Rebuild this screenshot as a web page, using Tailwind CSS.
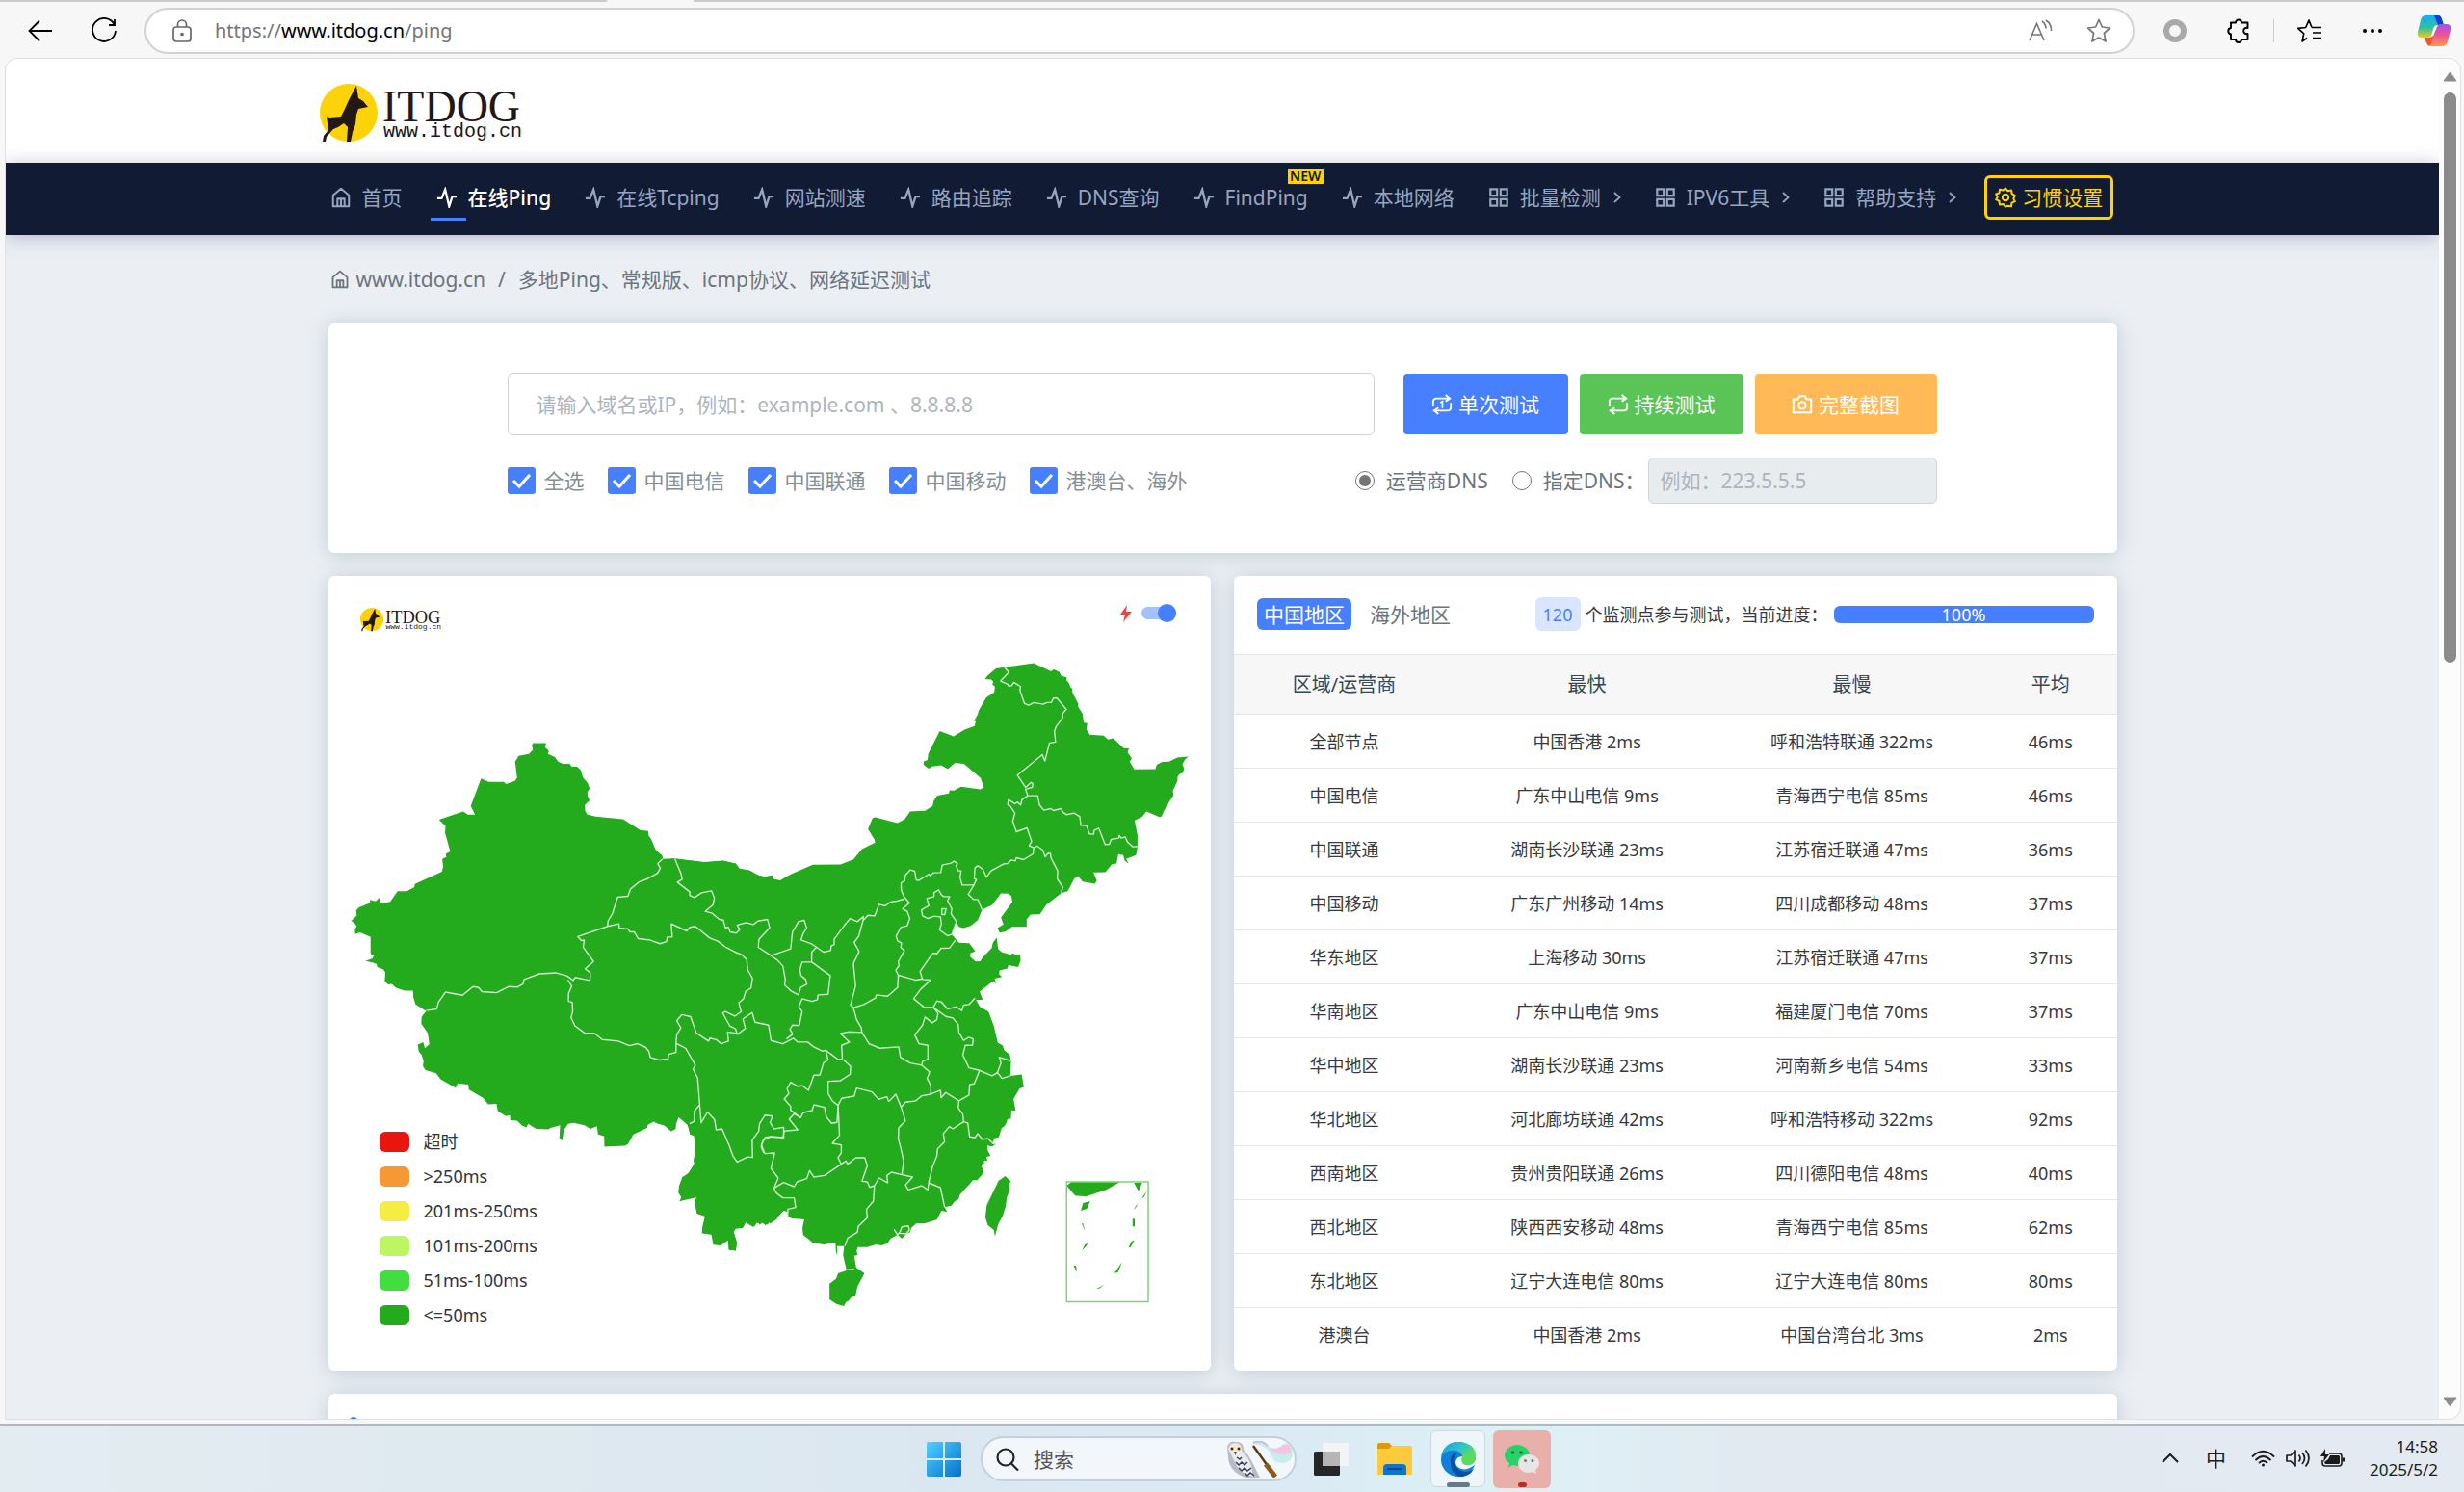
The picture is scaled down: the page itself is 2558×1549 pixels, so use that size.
<!DOCTYPE html>
<html lang="zh-CN">
<head>
<meta charset="utf-8">
<title>多地Ping - ITDOG</title>
<script src="https://cdn.jsdelivr.net/npm/@tailwindcss/browser@4"></script>
</head>
<body class="h-screen overflow-hidden bg-[#f7f7f7] font-['Noto_Sans','Noto_Sans_CJK_SC',sans-serif] text-[21px] leading-8 text-[#373a3c]">
<svg class="hidden" aria-hidden="true">
  <symbol id="pulse" viewBox="0 0 24 24"><path d="M1 13h5L10 3l4.500 19L18 11h5" fill="none" stroke="currentColor" stroke-width="2.500"/></symbol>
  <symbol id="home" viewBox="0 0 24 24"><path d="M3 9.500 12 2l9 7.500V22H3zM8 22v-8.500h8V22M12 13.500V22" fill="none" stroke="currentColor" stroke-width="2.200" stroke-linejoin="round"/></symbol>
  <symbol id="grid" viewBox="0 0 24 24"><path d="M2.500 2.500h7.500v7.500H2.500zM14 2.500h7.500v7.500H14zM2.500 14h7.500v7.500H2.500zM14 14h7.500v7.500H14z" fill="none" stroke="currentColor" stroke-width="2.400"/></symbol>
  <symbol id="chev" viewBox="0 0 8 12"><path d="M1 1l5.500 5L1 11" fill="none" stroke="currentColor" stroke-width="1.800"/></symbol>
  <symbol id="loop" viewBox="0 0 24 24"><path d="M2 14V9q0-4 4-4h14M16 1l5 4-5 3.500M22 10v5q0 4-4 4H4M8 15.500 3 19l5 4" fill="none" stroke="currentColor" stroke-width="2"/></symbol>
  <symbol id="dog" viewBox="0 0 212 62">
    <circle cx="30" cy="30" r="30" fill="#fcd208"/>
    <path d="M38 2 40 15l5 3 5 6-10 2-2 6-1 10-3 8-2 10h-4l1-15-4-4-6 4-5 2-7 8-1 5H3l1-6 5-6-2-14 3 1 12-1 4-8 4-9z" fill="#231815"/>
    <text x="65" y="39" font-family="Liberation Serif" font-size="46" fill="#231815">ITDOG</text>
    <text x="66" y="55" font-family="Liberation Mono" font-size="20" fill="#231815">www.itdog.cn</text>
  </symbol>
</svg>

<div class="flex h-full flex-col">
  <!-- browser toolbar -->
  <header class="shrink-0">
    <div class="flex h-[2px] justify-between"><i class="w-[630px] bg-[#cbcbcb]"></i><i class="ml-[90px] grow bg-[#cbcbcb]"></i></div>
    <div class="flex h-[59px] items-center pl-[29px] pr-[14px] text-black">
      <button aria-label="返回"><svg class="h-[26px] w-[26px]" viewBox="0 0 26 26" fill="none" stroke="currentColor" stroke-width="1.800"><path d="M25 13H2M12 2.500 1.500 13 12 23.500"/></svg></button>
      <button aria-label="刷新" class="ml-[39px]"><svg class="h-[28px] w-[28px]" viewBox="0 0 28 28" fill="none" stroke="currentColor" stroke-width="1.800"><path d="M25 8A12 12 0 1 0 26 14M25 2v6h-6"/></svg></button>
      <div class="ml-[28px] flex h-[48px] grow items-center rounded-full border-2 border-[#d2d2d2] bg-white pl-[27px] pr-[22px]">
        <svg class="h-[24px] w-[20px]" viewBox="0 0 20 24" fill="none" stroke="#666" stroke-width="1.700"><rect x="1" y="8" width="18" height="15" rx="3"/><path d="M5.500 8V5.500a4.500 4.500 0 0 1 9 0V8"/><circle cx="10" cy="15.500" r="1" fill="#555"/></svg>
        <a href="#" class="ml-[24px] grow text-[20px] text-[#757575]">https://<span class="text-black">www.itdog.cn</span>/ping</a>
        <button aria-label="朗读"><svg class="h-[24px] w-[26px]" viewBox="0 0 26 24" fill="none" stroke="#777" stroke-width="1.600"><path d="M1 22 8.500 4.500 16 22M3.500 16h10M14 2q4 3 4 7.500M18 1q6 4 5.500 11"/></svg></button>
        <button aria-label="收藏" class="ml-[34px]"><svg class="h-[26px] w-[26px]" viewBox="0 0 26 26" fill="none" stroke="#777" stroke-width="1.700" stroke-linejoin="round"><path d="m13 1.500 3.400 7.500 8 1-6 5.500 1.700 8.500-7.100-4-7.100 4 1.700-8.500-6-5.500 8-1z"/></svg></button>
      </div>
      <div class="ml-[30px] h-[24px] w-[24px] rounded-full border-[6px] border-[#a9a9a9]"></div>
      <button aria-label="扩展" class="ml-[42px]"><svg class="h-[26px] w-[26px]" viewBox="0 0 26 26" fill="none" stroke="currentColor" stroke-width="1.900"><path d="M9 4.500a3 3 0 0 1 6 0h6.500V10a3.200 3.200 0 1 0 0 6v6H15a3 3 0 0 1-6 0H4v-5.500a3.300 3.300 0 0 1 0-6.500V4.500z" stroke-linejoin="round"/></svg></button>
      <div class="ml-[22px] h-[24px] w-px bg-[#ccc]"></div>
      <button aria-label="收藏夹" class="ml-[24px]"><svg class="h-[26px] w-[26px]" viewBox="0 0 26 26" fill="none" stroke="currentColor" stroke-width="1.700" stroke-linejoin="round"><path d="M15 9.500 12 2 8.700 9.500l-8 .800 6 5.500L5 24l5-3.500M15 9.500h10M16 15h9M16 20.500h9"/></svg></button>
      <button aria-label="设置及其他" class="ml-[41px]"><svg class="h-[6px] w-[22px]" viewBox="0 0 22 6"><circle cx="3" cy="3" r="2"/><circle cx="11" cy="3" r="2"/><circle cx="19" cy="3" r="2"/></svg></button>
      <button aria-label="Copilot" class="ml-[36px]"><svg class="h-[32px] w-[34px]" viewBox="0 0 34 32">
        <defs><linearGradient id="ca" x1="0" y1="0" x2="0" y2="1"><stop offset="0" stop-color="#19a9f5"/><stop offset=".55" stop-color="#2fc3a0"/><stop offset="1" stop-color="#f4c81e"/></linearGradient><linearGradient id="cb" x1="0" y1="0" x2="0" y2="1"><stop offset="0" stop-color="#a44df0"/><stop offset=".5" stop-color="#ee5590"/><stop offset="1" stop-color="#fb9a45"/></linearGradient></defs>
        <path d="M9 0h12q3 0 4 4l2 6h-6q-4 0-5 4l-2 7q-1 2-4 2H4q-5 0-4-6L3 5Q4 0 9 0z" fill="url(#ca)"/><path d="M17 0h4q3 0 4 4l2 6h-6z" fill="#1441c9"/>
        <path d="M25 32H13q-3 0-4-4l-2-5h5q4 0 5-4l3-7q1-3 4-3h6q5 0 4 6l-3 12q-1 5-7 5z" fill="url(#cb)"/><path d="M7 23h5q3 0 4-2l-2 8q-1 3-3 2-2-2-4-8z" fill="#f2542b"/></svg></button>
    </div>
  </header>

  <div class="mr-[4px] ml-[6px] flex min-h-0 grow overflow-hidden rounded-t-xl rounded-br-xl outline outline-[#e0e0e0]">
    <div class="flex min-w-0 grow flex-col overflow-hidden bg-[#ebeff4]">
      <div class="h-[108px] shrink-0 bg-white">
        <div class="mx-auto w-full max-w-[1875px] pt-[26px]"><a href="#" aria-label="ITDOG"><svg class="h-[62px] w-[212px]"><use href="#dog"/></svg></a></div>
      </div>
      <nav class="relative h-[75px] shrink-0 bg-[#111b33] pb-[3px] text-[#96a5c0] shadow-[0_2px_18px_rgba(70,80,120,0.35)]">
        <div class="mx-auto flex h-full w-full max-w-[1853px] items-center gap-[35px] whitespace-nowrap [&_svg]:shrink-0">
          <a href="#" class="flex items-center gap-[11px]"><svg class="h-[22px] w-[22px]"><use href="#home"/></svg>首页</a>
          <a href="#" class="relative flex items-center gap-[11px] font-medium text-white"><svg class="h-[22px] w-[22px]"><use href="#pulse"/></svg>在线Ping<i class="absolute -bottom-2 -left-1.5 h-[3px] w-[37px] bg-[#4680ff]"></i></a>
          <a href="#" class="flex items-center gap-[11px]"><svg class="h-[22px] w-[22px]"><use href="#pulse"/></svg>在线Tcping</a>
          <a href="#" class="flex items-center gap-[11px]"><svg class="h-[22px] w-[22px]"><use href="#pulse"/></svg>网站测速</a>
          <a href="#" class="flex items-center gap-[11px]"><svg class="h-[22px] w-[22px]"><use href="#pulse"/></svg>路由追踪</a>
          <a href="#" class="flex items-center gap-[11px]"><svg class="h-[22px] w-[22px]"><use href="#pulse"/></svg>DNS查询</a>
          <a href="#" class="relative flex items-center gap-[11px]"><svg class="h-[22px] w-[22px]"><use href="#pulse"/></svg>FindPing<b class="absolute -top-3.5 -right-4 flex h-4 w-[37px] items-center justify-center bg-[#ffd300] text-[14px] font-semibold text-[#111b33]">NEW</b></a>
          <a href="#" class="flex items-center gap-[11px]"><svg class="h-[22px] w-[22px]"><use href="#pulse"/></svg>本地网络</a>
          <a href="#" class="flex items-center gap-[11px]"><svg class="h-[22px] w-[22px]"><use href="#grid"/></svg>批量检测<svg class="ml-0.5 h-[12px] w-[8px]"><use href="#chev"/></svg></a>
          <a href="#" class="flex items-center gap-[11px]"><svg class="h-[22px] w-[22px]"><use href="#grid"/></svg>IPV6工具<svg class="ml-0.5 h-[12px] w-[8px]"><use href="#chev"/></svg></a>
          <a href="#" class="flex items-center gap-[11px]"><svg class="h-[22px] w-[22px]"><use href="#grid"/></svg>帮助支持<svg class="ml-0.5 h-[12px] w-[8px]"><use href="#chev"/></svg></a>
          <button class="-ml-1.5 flex h-[46px] items-center gap-1.5 rounded-md border-[3px] border-[#ffd300] px-2 text-[#ffd300]"><svg class="h-[22px] w-[22px]" viewBox="0 0 24 24" fill="none" stroke="currentColor" stroke-width="2.200" stroke-linejoin="round"><path d="m12 1.500 2.600 3.200 4.100-.900.500 4.100 3.500 2-1.700 3.600 1.700 3-3.700 1.600-.500 4-4.200-.600L12 22.500l-2.600-2.800-4 .400-.600-4-3.500-1.700L3 11.500 1.300 8.200l3.600-1.300.600-4 4.100 1z"/><circle cx="12" cy="12" r="3.500"/></svg>习惯设置</button>
        </div>
      </nav>

      <main class="mx-auto flex w-full max-w-[1857px] flex-col">
        <div class="flex h-[91px] items-center gap-[7px] pl-[2px] text-[#6c757d]">
          <svg class="h-[20px] w-[20px]"><use href="#home"/></svg><a href="#">www.itdog.cn</a><span class="mx-1.5">/</span><span>多地Ping、常规版、icmp协议、网络延迟测试</span>
        </div>

        <section class="rounded-md bg-white pt-[52px] pr-[187px] pb-[51px] pl-[186px] shadow-[0_2px_20px_rgba(60,90,120,0.25)]">
          <div class="flex items-center">
            <input aria-label="域名或IP" placeholder="请输入域名或IP，例如：example.com 、8.8.8.8" class="h-[65px] min-w-0 grow rounded-md border border-[#ced4da] px-[29px] placeholder:text-[#adb5bd]">
            <button class="ml-[30px] flex h-[63px] w-[171px] items-center justify-center gap-[6px] rounded-sm bg-[#4680ff] text-white"><svg class="h-[22px] w-[22px]" viewBox="0 0 24 24"><use href="#loop"/><path d="m10 10 2.500-1.500V16" fill="none" stroke="currentColor" stroke-width="1.800"/></svg>单次测试</button>
            <button class="ml-3 flex h-[63px] w-[170px] items-center justify-center gap-[6px] rounded-sm bg-[#5ac456] text-white"><svg class="h-[22px] w-[22px]"><use href="#loop"/></svg>持续测试</button>
            <button class="ml-3 flex h-[63px] w-[189px] items-center justify-center gap-[6px] rounded-sm bg-[#ffba57] text-white"><svg class="h-[22px] w-[22px]" viewBox="0 0 24 24" fill="none" stroke="currentColor" stroke-width="2.200" stroke-linejoin="round"><path d="M2 6h5l2-3.500h6L17 6h5v15H2z"/><circle cx="12" cy="13" r="4"/></svg>完整截图</button>
          </div>
          <div class="mt-[23px] flex items-center whitespace-nowrap text-[#868e96]">
            <div id="checks" class="flex grow gap-[24px]"></div>
            <div class="flex items-center text-[#6c757d]">
              <label class="flex items-center gap-3"><input type="radio" name="dns" checked class="h-[20px] w-[20px] accent-[#757575]">运营商DNS</label>
              <label class="ml-[25px] flex items-center gap-3"><input type="radio" name="dns" class="h-[20px] w-[20px] accent-[#757575]">指定DNS：</label>
              <input aria-label="指定DNS" disabled placeholder="例如：223.5.5.5" class="ml-[3px] h-[48px] w-[300px] rounded-md border border-[#ced4da] bg-[#e9ecef] px-3 placeholder:text-[#adb5bd]">
            </div>
          </div>
        </section>

        <div class="mt-[24px] grid grid-cols-2 gap-[24px]">
          <section class="relative rounded-md bg-white shadow-[0_2px_20px_rgba(60,90,120,0.25)]">
            <svg class="block h-auto w-full" viewBox="341 598 916 825" role="img" aria-label="中国地图">
              <g fill="#24aa1d">
                <path transform="translate(340 600) scale(.33333 .52934)" d="M74 672 91 662 89 652 97 646 133 637 131 631 150 634 161 627 166 638 195 635 218 614 247 614 270 606 272 600 310 589 356 576 360 566 357 551 370 547 368 541 382 536 366 500 367 486 347 474 422 458 437 464 459 464 446 447 478 393 502 400 549 400 556 404 583 398 590 392 584 360 595 349 627 345 639 337 636 328 640 324 681 324 677 332 689 339 686 345 708 351 718 360 735 365 753 364 760 370 777 370 788 376 795 391 810 402 816 413 809 420 810 428 816 436 801 445 802 457 809 464 835 468 920 473 973 494 998 496 1000 506 1007 511 1022 534 1040 545 1043 551 1080 550 1173 557 1230 554 1270 560 1283 570 1313 573 1338 582 1360 586 1387 583 1388 590 1409 593 1440 582 1440 1237 1434 1243 1420 1240 1395 1258 1383 1258 1369 1268 1352 1264 1345 1268 1338 1262 1329 1271 1302 1262 1293 1274 1270 1276 1264 1283 1274 1302 1271 1318 1250 1318 1247 1298 1223 1308 1202 1306 1195 1287 1166 1284 1168 1270 1175 1251 1150 1246 1143 1220 1150 1214 1120 1215 1097 1222 1101 1214 1093 1205 1094 1192 1103 1187 1105 1175 1125 1166 1142 1148 1139 1143 1145 1125 1144 1100 1141 1092 1130 1089 1120 1072 1093 1057 1085 1070 1084 1080 1072 1084 1048 1071 1015 1066 997 1072 995 1078 952 1091 935 1110 925 1113 862 1115 861 1094 842 1091 839 1075 818 1080 800 1073 766 1068 749 1070 735 1083 731 1103 722 1098 724 1073 695 1078 687 1081 650 1080 636 1075 625 1070 619 1077 606 1074 590 1064 569 1063 568 1053 555 1055 530 1045 526 1031 500 1032 484 1019 440 1003 438 993 405 991 399 1000 352 983 338 971 305 965 297 957 299 947 293 935 284 928 281 915 298 910 303 922 317 914 312 892 292 874 293 860 307 849 274 836 267 822 266 809 239 809 212 803 200 796 189 797 178 791 180 773 173 767 155 763 153 757 140 754 118 751 140 746 144 741 134 737 134 704 101 695 86 698 85 688 91 683 84 677Z"/>
                <path transform="translate(680 660) scale(.3699 .33333)" d="M0 1110 0 665 20 685 22 697 55 694 140 706 192 701 227 710 235 725 265 731 287 745 307 751 330 746 331 759 350 763 380 743 442 713 520 712 556 696 580 664 617 644 615 634 597 602 610 567 617 565 680 583 700 571 715 547 757 545 778 530 781 515 791 498 824 491 826 481 838 482 858 470 912 478 922 473 913 443 866 399 841 396 821 415 802 403 777 407 767 414 753 402 753 391 764 387 766 367 798 297 837 313 868 292 896 281 899 266 894 265 905 244 907 234 929 192 951 176 953 158 946 152 948 142 942 136 925 135 932 124 956 102 980 98 1062 85 1110 111 1118 105 1133 112 1139 124 1155 130 1153 138 1160 146 1165 160 1170 164 1170 176 1187 212 1186 220 1199 243 1202 270 1212 273 1210 292 1219 308 1258 311 1270 323 1285 319 1314 350 1329 351 1325 363 1337 382 1331 392 1344 416 1403 415 1407 402 1422 393 1441 392 1465 379 1496 376 1486 385 1479 400 1484 414 1480 427 1471 430 1465 440 1465 452 1452 483 1454 497 1440 520 1435 535 1429 540 1421 561 1416 565 1378 547 1365 564 1345 575 1353 622 1353 657 1349 683 1321 695 1328 710 1317 700 1313 683 1299 680 1294 709 1281 711 1263 736 1229 737 1239 762 1233 772 1199 765 1186 748 1175 757 1157 795 1139 801 1097 838 1079 867 1053 868 1042 883 1042 906 1001 906 982 921 966 924 960 910 977 899 970 877 1002 829 999 810 990 803 970 802 945 838 917 853 905 885 885 903 865 910 852 906 845 893 832 930 852 956 881 957 898 982 884 989 884 1000 899 1014 912 1013 918 1002 944 972 947 956 958 940 962 975 972 985 997 993 1005 988 1009 994 1024 994 1025 1012 1018 1031 991 1025 988 1036 966 1042 965 1054 973 1062 952 1067 957 1083 948 1075 910 1108 918 1133 0 1133Z"/>
                <path transform="translate(680 960) scale(.3699 .33333)" d="M0 200 910 208 918 233 900 232 903 240 911 255 935 270 950 315 961 367 975 376 979 390 995 405 998 425 996 470 1028 466 1034 505 1022 510 1005 542 1011 578 999 577 998 603 988 605 985 617 978 629 972 632 964 661 951 664 946 680 955 683 945 690 932 687 933 703 941 719 929 722 932 735 923 733 922 744 915 747 921 773 903 795 892 794 880 810 868 823 855 840 851 853 839 862 831 874 812 879 819 894 803 890 790 918 755 930 732 930 718 944 715 957 704 963 692 977 680 965 660 977 652 991 635 998 620 995 595 1003 568 1003 565 1016 568 1028 558 1030 564 1067 587 1085 567 1127 562 1154 550 1160 541 1172 536 1173 529 1187 508 1180 489 1166 489 1117 507 1102 513 1085 537 1076 527 1028 530 1000 510 1000 511 1030 507 1018 506 992 493 989 475 996 441 989 431 979 415 966 413 943 418 917 383 914 372 906 372 893 361 890 343 904 341 916 323 930 316 922 310 936 299 925 296 933 292 922 288 930 283 926 276 941 254 927 246 942 227 943 220 955 229 990 226 1015 206 1010 205 981 184 998 163 996 158 964 131 960 133 940 141 908 117 898 110 860 119 848 68 860 75 848 66 835 68 810 76 785 90 778 110 745 113 712 109 657 97 652 92 620 66 598 54 625 55 633 45 643 27 625 0 616ZM982 782 998 799 994 804 995 823 986 850 983 877 975 906 962 932 953 970 950 950 933 935 926 910 930 873 963 797ZM1154 812 1168 800 1305 800 1265 825 1208 846 1178 843ZM1343 803H1366L1356 829ZM1200 866 1220 860 1211 884 1194 890ZM1339 915h6v24h-6zM1336 985l8-2-10 20-6 2zM1310 1050l-12 32-10 2zM1380 828l-9 20-6 2zM1173 1060l7 1 4 21zM1196 928l4 2 6 24zM1216 990l-8 12-11 12 8-18zM1354 870l-12 20 6-16zM1261 1120l-15 12-8 1z"/>
              </g>
              <path transform="translate(680 960) scale(.3699 .33333)" d="M1154 800H1383V1173H1154Z" fill="none" stroke="#82cf7e" stroke-width="1.500" vector-effect="non-scaling-stroke"/>
              <g fill="none" stroke="#cfeccd" stroke-width="1.400" stroke-linejoin="round">
                <path vector-effect="non-scaling-stroke" transform="translate(340 600) scale(.33333 .52934)" d="M1043 551 1028 560 1036 569 1027 579 995 590 970 596 943 610 935 624 903 626 887 658 873 673 872 683 779 703 790 711 799 710 796 724 828 752 802 766 818 774 817 789 771 783 765 789 745 780 710 774 660 776 612 787 608 796 590 802 565 801 526 813 481 811 470 803 453 801 420 818 367 812 345 832 340 845 307 848M872 683 907 678 908 686 935 688 942 694 955 694 967 707 1005 710 1035 717 1055 713 1058 704 1073 704 1070 678 1118 692 1128 685 1145 683 1190 706 1215 712 1240 724 1270 734 1288 738 1305 748 1308 768 1323 785 1318 804 1302 810 1295 825 1280 833 1288 850 1268 859 1238 850 1230 853 1252 878 1270 884 1275 893 1245 890 1248 908 1225 913 1210 905 1190 902 1186 908 1148 892 1130 860 1103 856 1087 868 1100 882 1087 895 1085 912 1085 930 1062 934 1060 943 1033 945 1005 940 1000 928 990 920 965 913 940 917 905 908 855 905 832 893 800 892 770 878 758 862 763 850 762 832 750 830 750 815 760 800 748 788M1085 912 1115 922 1145 955 1138 963 1152 980 1163 1068 1183 1047 1205 1062 1210 1082 1228 1080 1250 1112 1262 1133 1275 1145 1308 1135 1323 1136 1322 1102 1342 1085 1345 1070 1362 1053 1385 1055 1378 1068 1390 1080 1420 1077 1420 1097 1380 1095 1355 1103 1350 1115 1358 1127M1160 1032 1142 1045 1142 1065 1127 1070"/>
                <path vector-effect="non-scaling-stroke" transform="translate(680 660) scale(.3699 .33333)" d="M980 98 992 114 969 141 989 151 992 157 1000 155 1006 145 1025 158 1023 170 1036 211 1048 216 1062 208 1088 213 1099 208 1111 208 1117 194 1127 194 1153 229 1143 242 1143 256 1125 282 1120 297 1123 331 1106 334 1093 390 1086 370 1016 434 1039 472 1054 457 1059 460 1058 472 1039 478 1045 498 1073 498 1078 527 1090 543 1110 538 1117 544 1139 538 1143 549 1154 557 1175 552 1191 563 1194 590 1210 591 1218 617 1230 618 1231 606 1244 599 1262 650 1274 649 1279 634 1300 630 1302 622 1307 630 1318 626 1325 642 1340 657 1353 656M1045 498 1029 510 1025 527 1016 518 1009 523 991 511 989 526 996 530 1009 552 1003 577 1013 610 1043 598 1056 640 1049 654 1062 660 1060 679 1033 697 1013 691 1010 701 999 698 989 709 978 710 942 732 929 752 919 727 905 716 897 722 895 756 901 759 894 776 878 805 893 821 905 821 917 853M1062 660 1072 655 1087 667 1094 688 1102 677 1109 678 1110 691 1129 732 1128 757 1143 782 1139 801M894 776 861 776 855 752 858 732 850 732 844 716 848 709 838 702 830 708 805 714 801 737 780 738 771 747 768 742 739 762 732 760 728 733 715 729 702 745 700 763 690 769 690 790 697 811 713 832 694 850 707 858 714 880 707 903 689 908 676 935 680 950 691 957 689 970 699 980 682 1015 684 1027 675 1041 682 1057M697 820 678 826 660 829 645 841 628 836 616 872 597 870 583 886 584 874 567 890 547 880 534 897 502 945 502 962 494 965 492 980 472 985 440 960 409 947 415 927 425 910 418 886 402 890 385 922 380 975 325 996 289 970 291 945 321 909 315 883 288 888 275 899 255 893 230 901 237 915 227 926 210 922 205 907 197 910 191 885 180 883 160 864 140 858 162 838 166 816 158 794 130 800 110 815 97 808 97 797 62 767 76 758 72 740 55 694M583 886 571 935 558 955 572 983 556 1020 562 1090 548 1150 556 1158M325 996 343 1010 358 1028 365 1070 363 1087 380 1105 402 1118 408 1095 425 1085 422 1070 409 1058 406 1040 412 1016 439 1016 491 1058 485 1116 457 1118 455 1133 440 1138 412 1130 403 1155 412 1170 404 1213M439 1016 439 985 452 970M795 791 802 805 808 812 826 812 820 825 832 850 830 865 845 890 832 930 820 934 797 915 803 898 800 875 783 873 765 880 750 872 747 853 768 840 762 818 782 812 782 800ZM804 850 816 850 812 868 804 868ZM842 948 826 972 802 973 790 990 780 988 768 1005 743 1045 750 1070 773 1072 745 1100 725 1130M682 1057 732 1072 750 1068"/>
                <path vector-effect="non-scaling-stroke" transform="translate(680 960) scale(.3699 .33333)" d="M230 342 253 322 246 293 272 273 280 303 318 312 325 360 358 370 388 353 400 365 428 365 445 380 470 393 478 390 512 418 525 418M404 313 385 312 378 325 386 340 368 355M478 390 485 420 472 430 462 467 445 468 430 515 412 500 400 503 380 490 370 510 375 525 362 542 380 565 380 577 408 600 415 585 440 578 445 560 475 568 480 598 495 618 510 615 513 562 497 548 485 525 485 487 520 485 547 465 548 440 528 420M408 600 390 588 376 605 400 638 362 642 358 662 320 660 308 662 298 685 308 712 335 710 325 758 345 788 333 820 360 802 390 815 398 800 425 790 433 765 445 785 475 780 522 745 513 725 522 710 522 685 497 680 517 655 513 562M333 820 340 835 358 850 390 850 394 880 372 885 372 906M522 745 535 735 540 745 563 725 588 725 595 750 580 798 595 800 602 817 615 812 612 860 593 885 595 912 570 938 567 957 540 975 532 1000M615 812 628 788 652 803 650 780 663 770 692 778 722 785 702 810 710 825 748 812 765 825 767 803 800 818 812 879M513 562 523 540 558 533 565 508 608 520 627 543 650 535 655 550 675 527 690 568 702 610 683 632 682 665 690 700 697 735 692 778M690 568 702 552 730 548 748 532 773 527 800 515 802 538 815 522 852 548 850 570 863 590 865 613 835 635 825 628 808 650 812 675 792 697 790 720 778 752 767 803M865 613 877 617 882 660 897 662 905 650 918 668 933 665 950 683M556 258 565 295 578 320 580 335 600 370 630 384 683 380 688 412 715 430 748 437 770 458 763 478 773 500 773 527M580 335 545 333 520 338 545 365 523 375 525 418M556 258 585 248 618 228 620 218 652 222 680 195 682 157M725 230 755 257 780 257 793 275 790 295 777 305 757 287 750 312 728 343 740 370 765 375 765 418 750 425 748 437M780 257 790 237 803 240 820 262 845 255 860 267 865 250 880 248 897 228M780 257 815 285 835 290 850 310 852 335 865 360 880 350 892 355 890 375 870 375 863 405 880 445 910 453 945 470 960 460 970 430 965 412 997 423M910 453 895 495 882 497 880 530 852 548M960 460 973 478 996 470M558 1072 537 1074M670 948 680 965 687 955 692 940 710 937 713 950 704 962 685 960"/>
              </g>
            </svg>
            <svg class="absolute top-[33px] left-[33px] h-[25px] w-[85px]"><use href="#dog"/></svg>
            <label class="absolute top-[29px] right-[36px] flex items-center gap-[10px]" aria-label="动态效果">
              <svg class="h-[18px] w-[12px]" viewBox="0 0 12 18"><path d="M7 0 0 10h5l-2 8 9-11H6z" fill="#f44236"/></svg>
              <span class="grid items-center"><input type="checkbox" checked class="col-start-1 row-start-1 h-[13px] w-[36px] appearance-none rounded-full bg-[#a3c0ff]"><i class="col-start-1 row-start-1 h-[19px] w-[19px] justify-self-end rounded-full bg-[#4680ff]"></i></span>
            </label>
            <ul class="absolute bottom-[40px] left-[53px] text-[18px] leading-9 text-[#333]">
              <li class="flex items-center gap-[15px]"><i class="h-[21px] w-[31px] rounded-md bg-[#e71710]"></i>超时</li>
              <li class="flex items-center gap-[15px]"><i class="h-[21px] w-[31px] rounded-md bg-[#f69833]"></i>&gt;250ms</li>
              <li class="flex items-center gap-[15px]"><i class="h-[21px] w-[31px] rounded-md bg-[#f6ed44]"></i>201ms-250ms</li>
              <li class="flex items-center gap-[15px]"><i class="h-[21px] w-[31px] rounded-md bg-[#bef663]"></i>101ms-200ms</li>
              <li class="flex items-center gap-[15px]"><i class="h-[21px] w-[31px] rounded-md bg-[#42dd3f]"></i>51ms-100ms</li>
              <li class="flex items-center gap-[15px]"><i class="h-[21px] w-[31px] rounded-md bg-[#24aa1d]"></i>&lt;=50ms</li>
            </ul>
          </section>

          <section class="rounded-md bg-white shadow-[0_2px_20px_rgba(60,90,120,0.25)]">
            <div class="flex h-[81px] items-center px-[24px] pb-[2px] whitespace-nowrap">
              <button class="flex h-[33px] items-center rounded-md bg-[#4680ff] px-[7px] text-white">中国地区</button>
              <button class="ml-[19px] text-[#6c757d]">海外地区</button>
              <div class="ml-auto flex items-center text-[18px]">
                <span class="flex h-[35px] w-[47px] items-center justify-center rounded-md bg-[#dae6ff] text-[#4680ff]">120</span>
                <span class="ml-[5px]">个监测点参与测试，当前进度：</span>
                <span class="ml-[6px] flex h-[18px] w-[270px] items-center justify-center rounded-md bg-[#4680ff] text-white">100%</span>
              </div>
            </div>
            <table class="w-full table-fixed border-collapse text-center text-[18px]">
              <colgroup><col class="w-[25%]"><col class="w-[30%]"><col class="w-[30%]"><col class="w-[15%]"></colgroup>
              <thead class="bg-[#f7f7f7] text-[20px] text-[#37474f]"><tr class="h-[62px] border-y border-[#e2e7ee]"><th class="font-normal">区域/运营商</th><th class="font-normal">最快</th><th class="font-normal">最慢</th><th class="font-normal">平均</th></tr></thead>
              <tbody id="rows"></tbody>
            </table>
          </section>
        </div>

        <section class="mt-[24px] h-[80px] rounded-md bg-white pt-[24px] pl-[22px] shadow-[0_2px_20px_rgba(60,90,120,0.25)]"><div class="h-[20px] w-[8px] rounded-full bg-[#4680ff]"></div></section>
      </main>
    </div>
    <div class="flex w-[22px] shrink-0 flex-col items-center bg-[#fcfcfc] pt-[13px] pb-[12px]">
      <svg class="h-[11px] w-[15px]" viewBox="0 0 15 11"><path d="M7.500 1 14 10H1z" fill="#8b8b8b" stroke="#8b8b8b" stroke-linejoin="round"/></svg>
      <div class="mt-[11px] h-[592px] w-[13px] rounded-full bg-[#8b8b8b]"></div>
      <svg class="mt-auto h-[11px] w-[15px]" viewBox="0 0 15 11"><path d="M7.500 10 14 1H1z" fill="#8b8b8b" stroke="#8b8b8b" stroke-linejoin="round"/></svg>
    </div>
  </div>

  <!-- taskbar -->
  <footer class="mt-[5px] grid h-[71px] shrink-0 grid-cols-[1fr_auto_1fr] items-center border-t-2 border-[#b0b9c0] bg-[linear-gradient(90deg,#e3ecf1_0%,#dbe7f0_38%,#dbeaf4_52%,#dcf1f6_61%,#e2e9f1_72%,#e3eaf2_100%)]">
    <div></div>
    <div class="ml-[14px] flex items-center">
      <button aria-label="开始"><svg class="h-[36px] w-[36px]" viewBox="0 0 36 36"><defs><linearGradient id="wa" x1="0" y1="0" x2="1" y2="1"><stop offset="0" stop-color="#4fd2ff"/><stop offset="1" stop-color="#0570d0"/></linearGradient></defs><path d="M2 0h15v17H0V2Q0 0 2 0zM19 0h15q2 0 2 2v15H19zM0 19h17v17H2q-2 0-2-2zM19 19h17v15q0 2-2 2H19z" fill="url(#wa)"/></svg></button>
      <label class="ml-[20px] flex h-[47px] w-[328px] items-center overflow-hidden rounded-full border-2 border-[#c3d0db] bg-[#f3f7fb] pl-[14px]">
        <svg class="h-[24px] w-[24px] shrink-0" viewBox="0 0 24 24" fill="none" stroke="#222" stroke-width="2.200"><circle cx="10" cy="10" r="8.500"/><path d="m16 16.500 7 7"/></svg>
        <input aria-label="搜索" placeholder="搜索" class="ml-[15px] w-[200px] placeholder:text-[#555]">
        <svg class="h-[38px] w-[72px] shrink-0" viewBox="0 0 72 38">
          <path d="M1 6Q3 0 9 1q9-1 9 8 5 5 9 13 4 8 8 16H20Q3 32 2 17z" fill="#b9bcc4"/><path d="M2 8q2-6 7-6 7 0 7 8 8 8 10 16l2 11q-13-2-18-13z" fill="#e9eaee"/><circle cx="6" cy="8" r="2" fill="#e2a52b"/><circle cx="13" cy="8" r="2" fill="#e2a52b"/><circle cx="6" cy="8" r="1"/><circle cx="13" cy="8" r="1"/><path d="m8 11 3 0-1.500 4z" fill="#6b5233"/>
          <path d="m11 17 3 2 2-2M10 22l3 3 3-3 3 3 3-3M13 28l3 3 3-3 3 3 4-3M19 33l3 3 3-3 4 3" fill="none" stroke="#39405e" stroke-width="1.500"/>
          <path d="M28 2q10-3 15 3 8 6 15-1 5-3 9-1 4 8 0 17-10 6-18 0Q45 6 33 4z" fill="#c9ecec"/><path d="M45 7q8 4 14-3l7 0 1 8q-12 6-22-5z" fill="#f3c5e2"/><path d="M28 2q8-4 15 3" fill="none" stroke="#c9b9f0" stroke-width="2"/><path d="M28 5 51 37" stroke="#5a3c12" stroke-width="2.500"/><path d="m41 24 10 13" stroke="#8a5a14" stroke-width="5"/>
        </svg>
      </label>
      <button aria-label="任务视图" class="ml-[18px]"><svg class="h-[34px] w-[36px]" viewBox="0 0 36 34"><rect y="9" width="27" height="25" rx="1.500" fill="#262626"/><rect x="9" width="27" height="24" rx="1.500" fill="#f4f4f4"/><path d="M9 9h18v15H9z" fill="#b5b5b5"/></svg></button>
      <button aria-label="文件资源管理器" class="ml-[30px]"><svg class="h-[33px] w-[36px]" viewBox="0 0 36 33"><path d="M0 2q0-2 2-2h10l4 4-2 5H0z" fill="#dc9a0b"/><path d="M0 6h12l3-3h19q2 0 2 2v28H0z" fill="#fdca3c"/><path d="M6 33V26q0-4 4-4h16q4 0 4 4v7z" fill="#0f74cf"/><path d="M10 27h15" stroke="#08468c" stroke-width="2"/></svg></button>
      <button aria-label="Edge" class="ml-[19px] flex h-[59px] w-[57px] flex-col items-center rounded-md border border-[#cbdae5] bg-[#eef5fb] pt-[11px]">
        <svg class="h-[36px] w-[36px] shrink-0" viewBox="0 0 36 36"><defs><linearGradient id="ea" x1="0" y1="0" x2="1" y2=".6"><stop offset="0" stop-color="#1a9fdc"/><stop offset=".5" stop-color="#2cc3cd"/><stop offset="1" stop-color="#6be04a"/></linearGradient></defs><circle cx="18" cy="18" r="18" fill="#0f7fd8"/><path d="M0 16Q3 0 18 0q18 1 18 15 0 8-8 9-6 0-6-3 2-3 0-7-4-6-11-5Q3 9 0 16z" fill="url(#ea)"/><path d="M10 19q0-7 7-8-5 4-3 11 3 9 12 9 4 0 8-3-4 8-15 8Q9 32 10 19z" fill="#0c50a0"/><path d="M22 15q-6 0-7 6 0 5 6 7 7 2 15-5v-5q-3 7-10 6-6-1-4-9z" fill="#eef5fb"/><path d="M22 14q0 3 0 7 2 3 6 3 8-1 8-9l-5-4z" fill="#5bdb5b"/></svg>
        <i class="mt-[6px] h-[5px] w-[24px] shrink-0 rounded-full bg-[#637a8a]"></i></button>
      <button aria-label="微信" class="ml-[8px] flex h-[60px] w-[60px] flex-col items-center rounded-md bg-[#e9afab] pt-[15px]">
        <svg class="h-[30px] w-[36px] shrink-0" viewBox="0 0 36 30"><path d="M13 0c7 0 13 5 13 11s-6 11-13 11l-5-1-4 3 1-5Q0 16 0 11C0 5 6 0 13 0z" fill="#25d366"/><circle cx="8.500" cy="8" r="1.800" fill="#14713a"/><circle cx="17" cy="8" r="1.800" fill="#14713a"/><path d="M25 10c6 0 11 4 11 9q0 4-4 7l1 4-4-2-4 1c-6 0-11-4-11-10 0-5 5-9 11-9z" fill="#e6e6e6"/><circle cx="21.500" cy="16.500" r="1.500" fill="#777"/><circle cx="29" cy="16.500" r="1.500" fill="#777"/></svg>
        <i class="mt-[9px] h-[5px] w-[9px] shrink-0 rounded-full bg-[#c42b1c]"></i></button>
    </div>
    <div class="flex items-center justify-end pr-[27px] pb-[2px] text-[#1b1b1b]">
      <svg class="h-[10px] w-[18px]" viewBox="0 0 18 10" fill="none" stroke="currentColor" stroke-width="2"><path d="m1 9 8-8 8 8"/></svg>
      <span class="ml-[28px]">中</span>
      <svg class="ml-[26px] h-[18px] w-[25px]" viewBox="0 0 25 18" fill="none" stroke="currentColor" stroke-width="1.800"><path d="M1 7.500Q12.500-4 24 7.500M4.500 11q8-8 16 0M8 14q4.500-4.500 9 0"/><circle cx="12.500" cy="16" r="1.500" fill="currentColor" stroke="none"/></svg>
      <svg class="ml-[11px] h-[20px] w-[25px]" viewBox="0 0 25 20" fill="none" stroke="currentColor" stroke-width="1.700" stroke-linejoin="round"><path d="M1 7h4l5-5v16l-5-5H1zM13.500 6.500q3 3.500 0 7M17 4q5 6 0 12M20.500 1.500q7 8.500 0 17"/></svg>
      <svg class="ml-[11px] h-[20px] w-[25px]" viewBox="0 0 25 20"><path d="M9 5h10q3 0 3 3v7q0 3-3 3H5q-3 0-3-3v-3" fill="none" stroke="currentColor" stroke-width="1.600"/><path d="M10 7h9l1 1v7l-1 1H5l-1-2 4-3zM22.500 9.500H25v4h-2.500zM5 0 0 8h4l-1 6 6-8H5z" fill="currentColor"/></svg>
      <div class="ml-[26px] text-right text-[17px] leading-6">14:58<br>2025/5/2</div>
    </div>
  </footer>
</div>
<script>
const groups = ['全选','中国电信','中国联通','中国移动','港澳台、海外'];
document.getElementById('checks').innerHTML = groups.map(g => `<label class="flex items-center gap-[9px]"><span class="grid"><input type="checkbox" checked class="col-start-1 row-start-1 h-[28px] w-[29px] appearance-none rounded-[3px] bg-[#4680ff]"><svg class="pointer-events-none col-start-1 row-start-1 h-[28px] w-[29px]" viewBox="0 0 29 28"><path d="m6 14 6 6L23 8" fill="none" stroke="#fff" stroke-width="3"/></svg></span>${g}</label>`).join('');
const rows = [
['全部节点','中国香港 2ms','呼和浩特联通 322ms','46ms'],
['中国电信','广东中山电信 9ms','青海西宁电信 85ms','46ms'],
['中国联通','湖南长沙联通 23ms','江苏宿迁联通 47ms','36ms'],
['中国移动','广东广州移动 14ms','四川成都移动 48ms','37ms'],
['华东地区','上海移动 30ms','江苏宿迁联通 47ms','37ms'],
['华南地区','广东中山电信 9ms','福建厦门电信 70ms','37ms'],
['华中地区','湖南长沙联通 23ms','河南新乡电信 54ms','33ms'],
['华北地区','河北廊坊联通 42ms','呼和浩特移动 322ms','92ms'],
['西南地区','贵州贵阳联通 26ms','四川德阳电信 48ms','40ms'],
['西北地区','陕西西安移动 48ms','青海西宁电信 85ms','62ms'],
['东北地区','辽宁大连电信 80ms','辽宁大连电信 80ms','80ms'],
['港澳台','中国香港 2ms','中国台湾台北 3ms','2ms']];
document.getElementById('rows').innerHTML = rows.map(r => `<tr class="h-[56px] border-b border-[#e2e7ee] last:border-0">${r.map(c => `<td>${c}</td>`).join('')}</tr>`).join('');
</script>
</body>
</html>
